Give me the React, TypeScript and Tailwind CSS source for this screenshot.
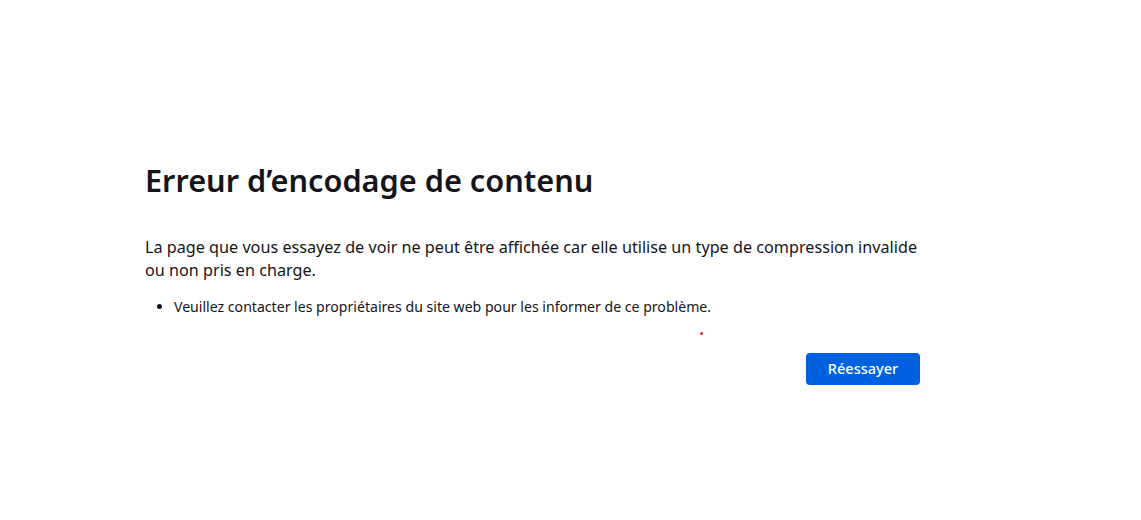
export default function App() {
  return (
    <div className="relative min-h-screen w-full bg-white font-['Segoe_UI','Noto_Sans',sans-serif] text-[#15141a]">
      <div className="ml-[145px] w-[775px] pt-[156px]">
        <h1 className="text-[30.7px] font-semibold leading-[48px]">Erreur d’encodage de contenu</h1>
        <p className="mt-[32px] text-[16.2px] leading-[23px]">
          La page que vous essayez de voir ne peut être affichée car elle utilise un type de compression invalide ou non pris en charge.
        </p>
        <ul className="mt-[15px] list-disc pl-[29px] text-[14.1px] leading-[20px]">
          <li>Veuillez contacter les propriétaires du site web pour les informer de ce problème.</li>
        </ul>
        <div className="mt-[36px] flex justify-end">
          <button className="h-[32px] w-[114px] rounded-[4px] bg-[#0061e0] text-[14.5px] font-medium text-white">Réessayer</button>
        </div>
      </div>
      <span className="absolute left-[700px] top-[332px] h-[3px] w-[3px] rounded-full bg-[#e0242b]" />
    </div>
  );
}
